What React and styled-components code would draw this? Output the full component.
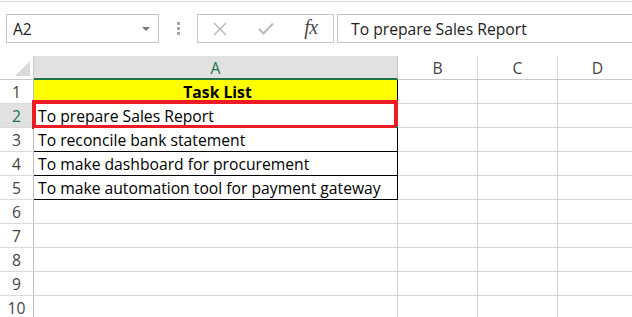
import React from "react";
import styled, { createGlobalStyle } from "styled-components";

const Global = createGlobalStyle`
  html, body { margin: 0; padding: 0; background: #fff; overflow: hidden; }
  body { font-family: "Open Sans", "Noto Sans", sans-serif; }
`;

const Page = styled.div`
  width: 632px;
  height: 317px;
  overflow: hidden;
  border-top: 1px solid #fff;
  position: relative;
`;

const TopLine = styled.div`
  height: 1px;
  background: #d6d6d6;
`;

const Toolbar = styled.div`
  display: flex;
  align-items: center;
  height: 29px;
  margin-top: 12px;
  padding-left: 6px;
`;

const NameBox = styled.div`
  box-sizing: border-box;
  width: 153px;
  height: 29px;
  border: 1px solid #c6c6c6;
  display: flex;
  align-items: center;
  justify-content: space-between;
  padding: 0 8px 0 6px;
  font-size: 15.5px;
  color: #222;
`;

const Caret = styled.span`
  width: 0;
  height: 0;
  border-left: 4px solid transparent;
  border-right: 4px solid transparent;
  border-top: 4px solid #777;
  margin-top: 1px;
`;

const Grip = styled.div`
  width: 38px;
  display: flex;
  flex-direction: column;
  align-items: center;
  gap: 2px;
  span {
    width: 3px;
    height: 3px;
    background: #a8a8a8;
  }
`;

const ButtonsBox = styled.div`
  box-sizing: border-box;
  width: 137px;
  height: 29px;
  border: 1px solid #c6c6c6;
  display: flex;
  align-items: center;
`;

const IconSlot = styled.div`
  width: ${(p) => p.$w}px;
  display: flex;
  justify-content: center;
  align-items: center;
  color: ${(p) => p.$c};
`;

const Fx = styled.span`
  font-family: "Liberation Serif", "DejaVu Serif", serif;
  font-style: italic;
  font-size: 20px;
  color: #4a4a4a;
  letter-spacing: -0.5px;
  margin-top: -3px;
  margin-left: 2px;
`;

const FormulaInput = styled.div`
  box-sizing: border-box;
  flex: 1;
  height: 29px;
  margin-left: 3px;
  border: 1px solid #c6c6c6;
  border-right: none;
  display: flex;
  align-items: center;
  padding-left: 13px;
  font-size: 15.7px;
  color: #222;
`;

const Sheet = styled.div`
  margin-top: 13px;
  display: grid;
  grid-template-columns: 34px 364px 80px 80px 80px;
  grid-template-rows: 24px repeat(10, 24px);
  font-size: 15.7px;
`;

const Corner = styled.div`
  box-sizing: border-box;
  border-right: 1px solid #c8c8c8;
  border-bottom: 1px solid #c8c8c8;
  position: relative;
  &::after {
    content: "";
    position: absolute;
    right: 3px;
    bottom: 3px;
    width: 0;
    height: 0;
    border-left: 15px solid transparent;
    border-bottom: 15px solid #dadada;
  }
`;

const ColHead = styled.div`
  box-sizing: border-box;
  display: flex;
  align-items: center;
  justify-content: center;
  border-right: 1px solid ${(p) => (p.$sel ? "#c8c8c8" : "#dadada")};
  border-bottom: ${(p) => (p.$sel ? "2px solid #217346" : "1px solid #c8c8c8")};
  background: ${(p) => (p.$sel ? "#e1e1e1" : "#fff")};
  color: ${(p) => (p.$sel ? "#217346" : "#444")};
  padding-top: ${(p) => (p.$sel ? "1px" : "0")};
`;

const RowHead = styled.div`
  box-sizing: border-box;
  display: flex;
  align-items: center;
  justify-content: center;
  border-right: 1px solid #c0c0c0;
  border-bottom: 1px solid #dadada;
  background: ${(p) => (p.$sel ? "#e1e1e1" : "#fff")};
  color: ${(p) => (p.$sel ? "#217346" : "#444")};
`;

const Cell = styled.div`
  box-sizing: border-box;
  position: relative;
  display: flex;
  align-items: center;
  justify-content: ${(p) => (p.$center ? "center" : "flex-start")};
  padding-left: 4px;
  padding-top: 1px;
  white-space: nowrap;
  border-right: 1px solid ${(p) => (p.$boxed ? "#000" : "#d4d4d4")};
  border-bottom: 1px solid ${(p) => (p.$boxed ? "#000" : "#d4d4d4")};
  background: ${(p) => p.$bg || "#fff"};
  font-weight: ${(p) => (p.$bold ? 700 : 400)};
  color: #000;
`;

const Selection = styled.div`
  position: absolute;
  left: -2px;
  top: -4px;
  right: -1px;
  bottom: -2px;
  border: 4px solid #ed1c24;
  pointer-events: none;
`;

const FillHandle = styled.div`
  position: absolute;
  right: -2px;
  bottom: -3px;
  width: 3px;
  height: 4px;
  background: #217346;
`;

const tasks = [
  "Task List",
  "To prepare Sales Report",
  "To reconcile bank statement",
  "To make dashboard for procurement",
  "To make automation tool for payment gateway",
];

export default function App() {
  const rows = Array.from({ length: 10 }, (_, i) => i + 1);
  return (
    <Page>
      <Global />
      <TopLine />
      <Toolbar>
        <NameBox>
          A2
          <Caret />
        </NameBox>
        <Grip>
          <span />
          <span />
          <span />
        </Grip>
        <ButtonsBox>
          <IconSlot $w={44} $c="#b5b5b5">
            <svg width="14" height="14" viewBox="0 0 14 14">
              <path d="M1 1 L13 13 M13 1 L1 13" stroke="currentColor" strokeWidth="1.4" fill="none" />
            </svg>
          </IconSlot>
          <IconSlot $w={48} $c="#bdbdbd">
            <svg width="16" height="13" viewBox="0 0 16 13">
              <path d="M1 7 L5.5 11.5 L15 1.5" stroke="currentColor" strokeWidth="2.2" fill="none" />
            </svg>
          </IconSlot>
          <IconSlot $w={40}>
            <Fx>fx</Fx>
          </IconSlot>
        </ButtonsBox>
        <FormulaInput>To prepare Sales Report</FormulaInput>
      </Toolbar>
      <Sheet>
        <Corner />
        <ColHead $sel>A</ColHead>
        <ColHead>B</ColHead>
        <ColHead>C</ColHead>
        <ColHead>D</ColHead>
        {rows.map((r) => {
          const t = tasks[r - 1];
          const boxed = r <= 5;
          return (
            <React.Fragment key={r}>
              <RowHead $sel={r === 2}>{r}</RowHead>
              <Cell
                $boxed={boxed}
                $center={r === 1}
                $bold={r === 1}
                $bg={r === 1 ? "#ffff00" : undefined}
              >
                {t}
                {r === 2 && (
                  <>
                    <Selection />
                    <FillHandle />
                  </>
                )}
              </Cell>
              <Cell />
              <Cell />
              <Cell />
            </React.Fragment>
          );
        })}
      </Sheet>
    </Page>
  );
}
